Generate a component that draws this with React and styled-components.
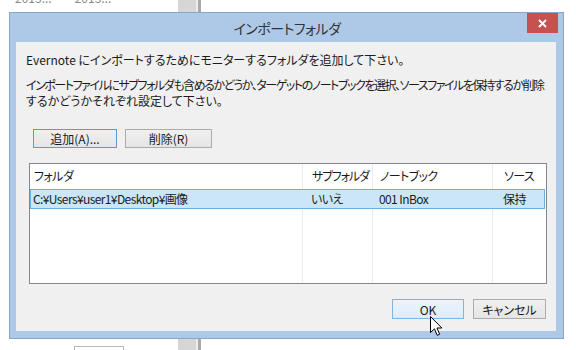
import React from "react";
import styled, { createGlobalStyle } from "styled-components";

const Global = createGlobalStyle`
  html, body { margin: 0; padding: 0; background: #ffffff; overflow: hidden; }
  body { font-family: "Noto Sans CJK JP", "Noto Sans", sans-serif; }
`;

const FONT = `"Noto Sans CJK JP", "Noto Sans", sans-serif`;

const Screen = styled.div`
  position: relative;
  width: 576px;
  height: 350px;
  overflow: hidden;
  background: #ffffff;
`;

/* ---------- background application ---------- */
const Desktop = styled.div`
  display: flex;
  width: 100%;
  height: 100%;
`;

const LeftPane = styled.div`
  width: 178px;
  display: flex;
  flex-direction: column;
  justify-content: space-between;
`;

const DateRow = styled.div`
  display: flex;
  gap: 23px;
  padding-left: 15px;
  margin-top: -9px;
  font-family: ${FONT};
  font-size: 12px;
  line-height: 14px;
  color: #8a8a8a;
`;

const MiniBox = styled.div`
  margin: 0 0 -4px 74px;
  width: 50px;
  height: 8px;
  border: 1px solid #b8b8b8;
  background: #fff;
  font-size: 4px;
  color: #aaa;
  line-height: 6px;
  padding-left: 3px;
  box-sizing: border-box;
`;

const Strip = styled.div`
  width: ${(p) => p.$w}px;
  background: ${(p) => p.$c};
`;

const RightPane = styled.div`
  flex: 1;
  background: #ffffff;
`;

/* ---------- dialog window ---------- */
const Dialog = styled.div`
  position: absolute;
  left: 9px;
  top: 12px;
  width: 555px;
  height: 327px;
  box-sizing: border-box;
  border: 1px solid #86a5c9;
  background: #adc9e7;
  padding: 0 7px 7px 6px;
  display: flex;
  flex-direction: column;
  font-family: ${FONT};
  font-feature-settings: "palt";
`;

const TitleBar = styled.div`
  height: 30px;
  display: grid;
  grid-template-columns: 1fr auto 1fr;
  margin-right: -2px;
`;

const Title = styled.div`
  grid-column: 2;
  align-self: center;
  font-size: 14px;
  letter-spacing: -0.5px;
  line-height: 18px;
  color: #333333;
  padding-top: 1px;
`;

const CloseBtn = styled.div`
  grid-column: 3;
  justify-self: end;
  align-self: start;
  width: 31px;
  height: 20px;
  background: #c75050;
  display: flex;
  align-items: center;
  justify-content: center;
`;

const Client = styled.div`
  flex: 1;
  background: #f0f0f0;
  padding: 11px 9px 12px 10px;
  display: flex;
  flex-direction: column;
  font-size: 12px;
  color: #1a1a1a;
`;

const Para = styled.p`
  margin: 0 0 ${(p) => p.$mb || 0}px 0;
  line-height: ${(p) => p.$lh || 14}px;
  white-space: nowrap;
`;

const Line = styled.span`
  display: block;
  letter-spacing: ${(p) => p.$ls || 0}px;
`;

const ButtonRow = styled.div`
  display: flex;
  gap: 8px;
  margin: 20px 0 0 7px;
`;

const Button = styled.div`
  box-sizing: border-box;
  width: ${(p) => p.$w}px;
  height: ${(p) => p.$h || 19}px;
  display: flex;
  align-items: center;
  justify-content: center;
  font-size: 12px;
  color: #1a1a1a;
  border: 1px solid
    ${(p) =>
      p.$state === "focus" ? "#5a9ad6" : p.$state === "hover" ? "#7eb4ea" : "#acacac"};
  background: ${(p) =>
    p.$state === "hover"
      ? "linear-gradient(#ecf4fc, #dcecfc)"
      : "linear-gradient(#f0f0f0, #e5e5e5)"};
`;

const ListBox = styled.div`
  margin: 15px 0 0 3px;
  height: 121px;
  box-sizing: border-box;
  border: 1px solid #828790;
  background-color: #ffffff;
  background-image:
    linear-gradient(to right, transparent 272px, #ececec 272px, #ececec 273px, transparent 273px),
    linear-gradient(to right, transparent 342px, #ececec 342px, #ececec 343px, transparent 343px),
    linear-gradient(to right, transparent 462px, #ececec 462px, #ececec 463px, transparent 463px);
  display: flex;
  flex-direction: column;
`;

const Row = styled.div`
  display: grid;
  grid-template-columns: 272px 70px 120px 1fr;
  height: ${(p) => (p.$header ? 24 : 20)}px;
  margin: ${(p) => (p.$header ? "0" : "1px 1px 0 0")};
  box-sizing: border-box;
  align-items: center;
  border: ${(p) => (p.$selected ? "1px solid #6cb0dc" : "1px solid transparent")};
  background: ${(p) => (p.$selected ? "#cbe6f6" : "transparent")};
`;

const Cell = styled.div`
  padding-left: ${(p) => p.$pl}px;
  white-space: nowrap;
  line-height: 14px;
  letter-spacing: ${(p) => (p.$tight ? -1.1 : -0.6)}px;
`;

const Footer = styled.div`
  display: flex;
  justify-content: flex-end;
  gap: 9px;
  margin: 15px 1px 0 0;
`;

const Cursor = styled.svg`
  position: absolute;
  left: 430px;
  top: 316px;
`;

const cols = [{ pl: 2 }, { pl: 8 }, { pl: 6 }, { pl: 10 }];

export default function App() {
  const header = ["フォルダ", "サブフォルダ", "ノートブック", "ソース"];
  const row = ["C:¥Users¥user1¥Desktop¥画像", "いいえ", "001 InBox", "保持"];
  return (
    <Screen>
      <Global />
      <Desktop>
        <LeftPane>
          <DateRow>
            <span>2013...</span>
            <span>2013...</span>
          </DateRow>
          <MiniBox>------ ------</MiniBox>
        </LeftPane>
        <Strip $w={18} $c="#d6d6d6" />
        <Strip $w={2} $c="#ececec" />
        <Strip $w={3} $c="#a9a9a9" />
        <RightPane />
      </Desktop>

      <Dialog>
        <TitleBar>
          <Title>インポートフォルダ</Title>
          <CloseBtn>
            <svg width="9" height="9" viewBox="0 0 9 9">
              <path d="M1 1 L8 8 M8 1 L1 8" stroke="#ffffff" strokeWidth="1.8" />
            </svg>
          </CloseBtn>
        </TitleBar>
        <Client>
          <Para $mb={10}>Evernote にインポートするためにモニターするフォルダを追加して下さい。</Para>
          <Para $lh={16}>
            <Line $ls={-1.45}>
              インポートファイルにサブフォルダも含めるかどうか、ターゲットのノートブックを選択、ソースファイルを保持するか削除
            </Line>
            <Line>するかどうかそれぞれ設定して下さい。</Line>
          </Para>
          <ButtonRow>
            <Button $w={84} $state="focus">追加(A)...</Button>
            <Button $w={87}>削除(R)</Button>
          </ButtonRow>
          <ListBox>
            <Row $header>
              {header.map((h, i) => (
                <Cell key={h} $pl={cols[i].pl + 1} $tight={i === 1}>{h}</Cell>
              ))}
            </Row>
            <Row $selected>
              {row.map((c, i) => (
                <Cell key={c} $pl={cols[i].pl}>{c}</Cell>
              ))}
            </Row>
          </ListBox>
          <Footer>
            <Button $w={72} $h={20} $state="hover">OK</Button>
            <Button $w={73} $h={20}>キャンセル</Button>
          </Footer>
        </Client>
      </Dialog>

      <Cursor width="13" height="21" viewBox="0 0 13 21">
        <path
          d="M0.5 0.5 L0.5 16.5 L4.5 12.8 L7.2 19.3 L9.6 18.3 L7 12 L11.8 12 Z"
          fill="#ffffff"
          stroke="#000000"
          strokeWidth="1"
        />
      </Cursor>
    </Screen>
  );
}
